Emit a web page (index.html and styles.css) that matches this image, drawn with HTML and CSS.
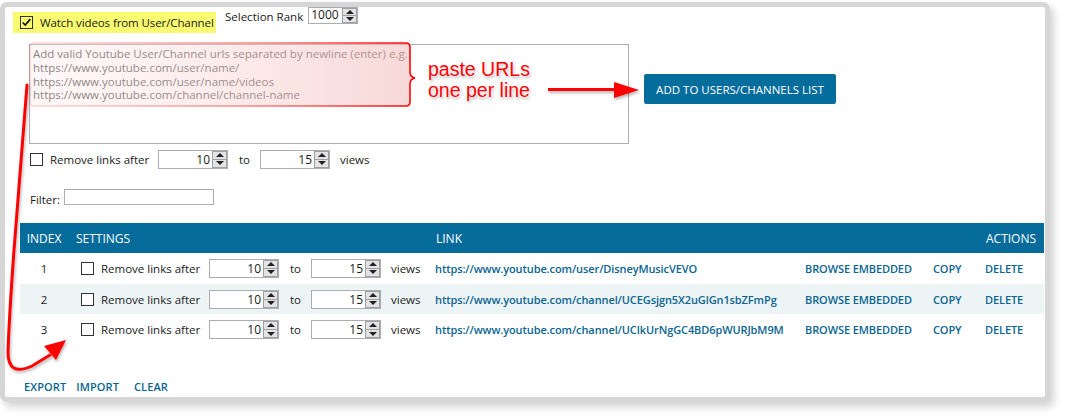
FILE: index.html
```html
<!DOCTYPE html>
<html>
<head>
<meta charset="utf-8">
<link rel="stylesheet" href="styles.css">
</head>
<body>
<div class="frame">
  <div class="top">
    <label class="watch"><span class="cb checked"><svg viewBox="0 0 13 13" width="11" height="11"><path d="M2 6.5 L5 9.5 L11 2.5" fill="none" stroke="#111" stroke-width="2"/></svg></span>Watch videos from User/Channel</label>
    <span class="rank-label">Selection Rank</span>
    <span class="spin rank"><span class="val">1000</span><span class="btns"><span class="up"></span><span class="down"></span></span></span>
  </div>
  <div class="urls">Add valid Youtube User/Channel urls separated by newline (enter) e.g.:<br>https://www.youtube.com/user/name/<br>https://www.youtube.com/user/name/videos<br>https://www.youtube.com/channel/channel-name</div>
  <button class="add">ADD TO USERS/CHANNELS LIST</button>
  <div class="settings top-settings">
    <span class="cb"></span><span class="lbl">Remove links after</span>
    <span class="spin"><span class="val">10</span><span class="btns"><span class="up"></span><span class="down"></span></span></span>
    <span class="to">to</span>
    <span class="spin"><span class="val">15</span><span class="btns"><span class="up"></span><span class="down"></span></span></span>
    <span class="views">views</span>
  </div>
  <div class="filter"><span>Filter:</span><span class="filter-input"></span></div>
  <div class="table">
    <div class="row head">
      <div class="c-idx">INDEX</div><div class="c-set">SETTINGS</div><div class="c-link">LINK</div><div class="c-b"></div><div class="c-c"></div><div class="c-d">ACTIONS</div>
    </div>
    <div class="row">
      <div class="c-idx">1</div>
      <div class="c-set settings"><span class="cb"></span><span class="lbl">Remove links after</span><span class="spin"><span class="val">10</span><span class="btns"><span class="up"></span><span class="down"></span></span></span><span class="to">to</span><span class="spin"><span class="val">15</span><span class="btns"><span class="up"></span><span class="down"></span></span></span><span class="views">views</span></div>
      <div class="c-link a">https://www.youtube.com/user/DisneyMusicVEVO</div><div class="c-b a">BROWSE EMBEDDED</div><div class="c-c a">COPY</div><div class="c-d a">DELETE</div>
    </div>
    <div class="row alt">
      <div class="c-idx">2</div>
      <div class="c-set settings"><span class="cb"></span><span class="lbl">Remove links after</span><span class="spin"><span class="val">10</span><span class="btns"><span class="up"></span><span class="down"></span></span></span><span class="to">to</span><span class="spin"><span class="val">15</span><span class="btns"><span class="up"></span><span class="down"></span></span></span><span class="views">views</span></div>
      <div class="c-link a">https://www.youtube.com/channel/UCEGsjgn5X2uGlGn1sbZFmPg</div><div class="c-b a">BROWSE EMBEDDED</div><div class="c-c a">COPY</div><div class="c-d a">DELETE</div>
    </div>
    <div class="row">
      <div class="c-idx">3</div>
      <div class="c-set settings"><span class="cb"></span><span class="lbl">Remove links after</span><span class="spin"><span class="val">10</span><span class="btns"><span class="up"></span><span class="down"></span></span></span><span class="to">to</span><span class="spin"><span class="val">15</span><span class="btns"><span class="up"></span><span class="down"></span></span></span><span class="views">views</span></div>
      <div class="c-link a">https://www.youtube.com/channel/UClkUrNgGC4BD6pWURJbM9M</div><div class="c-b a">BROWSE EMBEDDED</div><div class="c-c a">COPY</div><div class="c-d a">DELETE</div>
    </div>
  </div>
  <div class="bottom"><span class="export">EXPORT</span><span class="import">IMPORT</span><span class="clear">CLEAR</span></div>
</div>
<svg class="notes" width="1066" height="419" viewBox="0 0 1066 419">
  <defs>
    <linearGradient id="fillg" x1="0" y1="0" x2="1" y2="0">
      <stop offset="0" stop-color="#ffe4e4" stop-opacity="0.25"/>
      <stop offset="1" stop-color="#f2b8b8" stop-opacity="0.55"/>
    </linearGradient>
    <linearGradient id="strokeg" x1="0" y1="0" x2="1" y2="0">
      <stop offset="0" stop-color="#ff6060" stop-opacity="0.25"/>
      <stop offset="0.6" stop-color="#ff3030" stop-opacity="0.6"/>
      <stop offset="1" stop-color="#ff0000" stop-opacity="1"/>
    </linearGradient>
    <filter id="sh" x="-10%" y="-10%" width="130%" height="140%">
      <feDropShadow dx="1" dy="2" stdDeviation="1.5" flood-color="#000" flood-opacity="0.3"/>
    </filter>
  </defs>
  <path d="M34,43 H406 Q410,43 410,47 V72 Q410,77 415,78 Q410,79 410,84 V102 Q410,106 406,106 H34 Q30,106 30,102 V47 Q30,43 34,43 Z" fill="url(#fillg)" stroke="url(#strokeg)" stroke-width="1.6"/>
  <g filter="url(#sh)">
    <line x1="548" y1="89.5" x2="622" y2="89.5" stroke="#ff0000" stroke-width="3"/>
    <polygon points="614,82 639,90 614,98" fill="#ff0000"/>
    <path d="M27,85 L14,250 Q9,320 8,352 Q8,377 32,366 L50,355" fill="none" stroke="#ff0000" stroke-width="3" stroke-linecap="round"/>
    <polygon points="66,340 56,360 44,346" fill="#ff0000"/>
  </g>
</svg>
<div class="paste">paste URLs<br>one per line</div>
</body>
</html>
```
FILE: styles.css
```css
html, body {
  margin: 0;
  padding: 0;
  background: #ffffff;
}
body {
  width: 1066px;
  height: 419px;
  position: relative;
  overflow: hidden;
  font-family: "Open Sans", "Noto Sans", sans-serif;
  font-size: 11.5px;
  color: #1a1a1a;
}
.frame {
  margin-top: 2px;
  width: 1050px;
  height: 400px;
  box-sizing: border-box;
  border: 5px solid #d6d6d6;
  border-radius: 7px;
  box-shadow: 4px 5px 9px rgba(0,0,0,0.18);
  background: #fff;
}
.top {
  display: flex;
  align-items: flex-start;
  padding-left: 8px;
}
.watch {
  margin-top: 5px;
  height: 21px;
  width: 203px;
  box-sizing: border-box;
  background: #fbfb72;
  display: flex;
  align-items: center;
  padding-left: 7px;
  gap: 7px;
  white-space: nowrap;
  letter-spacing: -0.1px;
}
.cb {
  width: 13px;
  height: 13px;
  box-sizing: border-box;
  border: 1px solid #333;
  background: #fff;
  display: inline-flex;
  align-items: center;
  justify-content: center;
  flex: none;
}
.watch .cb { background: transparent; }
.rank-label {
  margin-left: 9px;
  margin-top: 2px;
  line-height: 16px;
}
.spin {
  display: inline-flex;
  height: 19px;
  width: 70px;
  box-sizing: border-box;
  border: 1px solid #abadb3;
  background: #fff;
  flex: none;
}
.spin.rank {
  margin-left: 5px;
  width: 50px;
  height: 17px;
}
.spin .val {
  flex: 1;
  text-align: right;
  padding-right: 2px;
  line-height: 17px;
  font-size: 12px;
}
.spin.rank .val { line-height: 14px; text-align: left; padding-left: 2px; }
.btns {
  width: 15px;
  display: flex;
  flex-direction: column;
  flex: none;
}
.btns span {
  flex: 1;
  background: #e3e3e3;
  border: 1px solid #a0a0a0;
  position: relative;
}
.btns span + span { border-top: 0; }
.btns .up::after, .btns .down::after {
  content: "";
  position: absolute;
  left: 50%;
  top: 50%;
  margin-left: -4px;
  border-left: 4px solid transparent;
  border-right: 4px solid transparent;
}
.btns .up::after { border-bottom: 4px solid #222; margin-top: -2.5px; }
.btns .down::after { border-top: 4px solid #222; margin-top: -2px; }
.urls {
  margin: 11px 0 0 24px;
  width: 600px;
  height: 100px;
  box-sizing: border-box;
  border: 1px solid #abadb3;
  padding: 2px 3px;
  color: #626262;
  line-height: 13.8px;
  font-size: 11.5px;
}
.add {
  position: absolute;
  left: 644px;
  top: 74px;
  width: 192px;
  height: 30px;
  border: 0;
  border-radius: 2px;
  background: #056d9c;
  color: #fff;
  font-family: "Open Sans", sans-serif;
  font-size: 11.5px;
  padding: 0;
}
.settings {
  display: flex;
  align-items: center;
  white-space: nowrap;
}
.settings .lbl { margin-left: 7px; width: 108px; }
.settings .to { margin-left: 11px; width: 21px; }
.settings .views { margin-left: 10px; }
.top-settings {
  margin: 5px 0 0 25px;
  height: 20px;
}
.filter {
  margin: 20px 0 0 25px;
  display: flex;
  align-items: flex-end;
  gap: 4px;
  height: 18px;
}
.filter span:first-child { line-height: 14px; }
.filter-input {
  width: 150px;
  height: 16px;
  box-sizing: border-box;
  border: 1px solid #abadb3;
  margin-bottom: 2px;
}
.table {
  margin: 16px 0 0 15px;
  width: 1024px;
}
.row {
  display: grid;
  grid-template-columns: 48px 362px 370px 128px 52px 64px;
  height: 30.7px;
  align-items: center;
}
.row.head {
  height: 30px;
  background: #056b9b;
  color: #fff;
  font-size: 12px;
}
.row.alt { background: #edf4f6; }
.c-idx { text-align: center; }
.head .c-set { padding-left: 8px; }
.c-set.settings { padding-left: 13px; }
.c-link { padding-left: 5px; white-space: nowrap; overflow: hidden; }
.head .c-link { padding-left: 6px; }
.c-b, .c-c, .c-d { padding-left: 5px; white-space: nowrap; }
.head .c-d { padding-left: 6px; }
.a {
  color: #0a6591;
  font-weight: 600;
  font-size: 11px;
  letter-spacing: -0.1px;
}
.row .c-link.a { padding-right: 0; max-width: 351px; }
.bottom {
  margin: 34px 0 0 19px;
  display: flex;
  color: #0a6591;
  font-weight: 600;
  font-size: 11px;
  letter-spacing: 0.1px;
}
.import { margin-left: 10px; }
.clear { margin-left: 15px; }
.notes {
  position: absolute;
  left: 0;
  top: 0;
  pointer-events: none;
}
.paste {
  position: absolute;
  left: 428px;
  top: 59px;
  color: #ff0000;
  font-family: "Liberation Sans", Arial, sans-serif;
  font-size: 19.5px;
  line-height: 21px;
  text-shadow: 0 0 2px #fff, 0 0 3px #fff, 1px 2px 3px rgba(0,0,0,0.35);
}
```
